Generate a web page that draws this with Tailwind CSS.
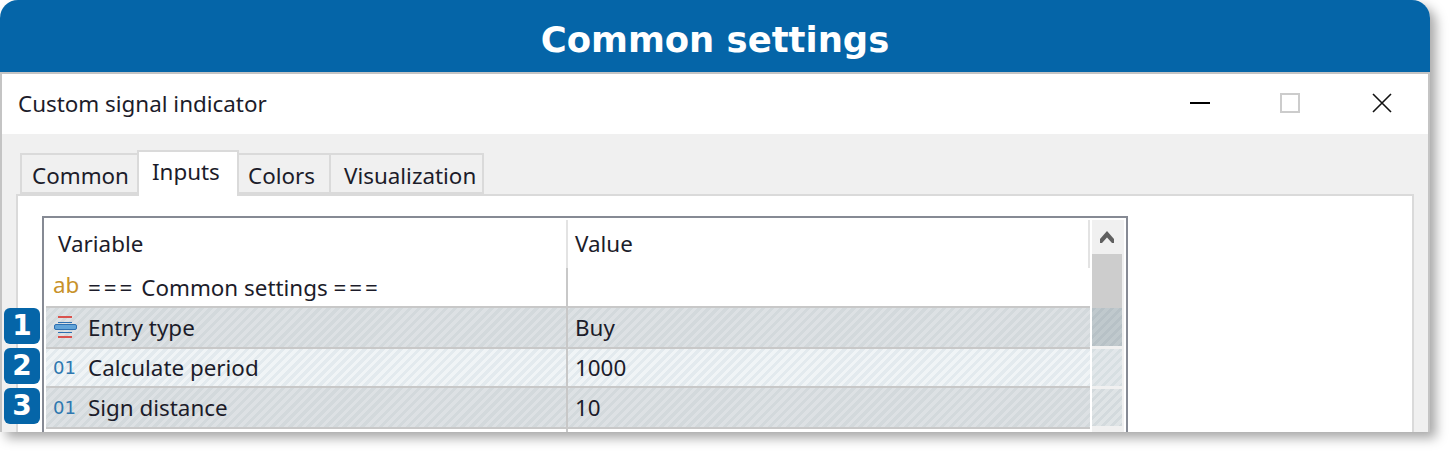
<!DOCTYPE html>
<html lang="en">
<head>
  <meta charset="UTF-8" />
  <title>Common settings</title>
  <script src="https://cdn.jsdelivr.net/npm/@tailwindcss/browser@4"></script>
</head>
<body class="bg-white h-[452px] overflow-hidden font-['Noto_Sans',sans-serif]">

  <div class="relative w-[1430px] h-[432px] rounded-t-[18px] shadow-[6px_6px_12px_rgba(0,0,0,0.35)]">
    <h1 class="h-[72px] rounded-t-[18px] bg-[#0565a8] text-white text-center font-['DejaVu_Sans',sans-serif] font-bold text-[35.4px] leading-[80px]">Common settings</h1>

    <div class="h-[360px] overflow-hidden border-t-2 border-x-2 border-[#c4c4c4] bg-[#f0f0f0] text-[22.4px] text-[#1c1c2a]">
      <!-- title bar -->
      <div class="h-[60px] bg-white flex items-center justify-between pl-[16px] pr-[36px] pb-[2px]">
        <span class="mt-[2px]">Custom signal indicator</span>
        <div class="flex items-center">
          <div class="w-[20px] h-[2px] bg-black"></div>
          <div class="ml-[70px] w-[20px] h-[20px] border-2 border-[#cccccc]"></div>
          <svg class="ml-[72px] w-[20px] h-[20px]" viewBox="0 0 20 20" fill="none" stroke="#111" stroke-width="1.6"><path d="M1 1l18 18M19 1L1 19" /></svg>
        </div>
      </div>

      <!-- tabs -->
      <div class="h-[60px] pl-[18px] flex items-end">
        <div class="w-[117px] h-[41px] pl-[10px] border-2 border-[#dadada] border-r-0 leading-[41px]">Common</div>
        <div class="relative z-10 w-[102px] h-[46px] -mb-[2px] pl-[13px] bg-white border-2 border-b-0 border-[#dadada] leading-[40px]">Inputs</div>
        <div class="w-[92px] h-[41px] pl-[9px] border-y-2 border-r-2 border-[#dadada] leading-[41px]">Colors</div>
        <div class="w-[153px] h-[41px] pl-[13px] border-y-2 border-r-2 border-[#dadada] leading-[41px]">Visualization</div>
      </div>

      <!-- panel -->
      <div class="ml-[14px] w-[1398px] h-[240px] bg-white border-2 border-[#dadada] pl-[24px] pt-[20px]">
        <div class="w-[1086px] h-[222px] border-2 border-[#868a94] flex p-[2px] pb-0 pr-0">
          <div class="w-[1044px]">
            <div class="h-[48px] grid grid-cols-[520px_2px_1fr]">
              <div class="pl-[12px] leading-[48px]">Variable</div>
              <div class="bg-[#e3e3e3]"></div>
              <div class="flex justify-between pl-[7px] leading-[48px]">Value<span class="w-[2px] h-[48px] bg-[#e3e3e3]"></span></div>
            </div>
            <div class="h-[38px] grid grid-cols-[520px_2px_1fr]">
              <div class="flex items-center pt-[2px]"><span class="w-[42px] pl-[7px] text-[#c8922a] -mt-[6px]">ab</span><span><span class="tracking-[3px]">===</span> Common settings <span class="tracking-[3px]">===</span></span></div>
              <div class="bg-[#c8c8c8]"></div>
              <div></div>
            </div>
            <div class="h-[43px] grid grid-cols-[520px_2px_1fr] border-y-2 border-y-[#c8c8c8] bg-[repeating-linear-gradient(135deg,#d3d9dc_0px,#d3d9dc_3.2px,#dde1e4_3.2px,#dde1e4_6.4px)]">
              <div class="flex items-center">
                <span class="w-[42px] pl-[7px] -mt-[1px]">
                  <svg class="block w-[24px] h-[22px]" viewBox="0 0 24 22"><path d="M5 0h14v2H5zM5 20h14v2H5z" fill="#d9534f" /><path d="M5 6h14v1H5zM5 16h14v1H5z" fill="#2e6fb0" /><rect x="1.500" y="8.500" width="22" height="5" rx="1.500" fill="#62a4d8" stroke="#2e6fb0" /></svg>
                </span>
                <span>Entry type</span>
              </div>
              <div class="bg-[#c8c8c8]"></div>
              <div class="pl-[7px] leading-[39px]">Buy</div>
            </div>
            <div class="h-[39px] grid grid-cols-[520px_2px_1fr] border-b-2 border-b-[#c8c8c8] bg-[repeating-linear-gradient(135deg,#e3eaee_0px,#e3eaee_3.2px,#f0f4f6_3.2px,#f0f4f6_6.4px)]">
              <div class="flex items-center"><span class="w-[42px] pl-[7px] text-[#2f78b0] text-[18px] font-['DejaVu_Sans',sans-serif]">01</span><span>Calculate period</span></div>
              <div class="bg-[#c8c8c8]"></div>
              <div class="pl-[7px] leading-[37px]">1000</div>
            </div>
            <div class="h-[41px] grid grid-cols-[520px_2px_1fr] border-b-2 border-b-[#c8c8c8] bg-[repeating-linear-gradient(135deg,#d3d9dc_0px,#d3d9dc_3.2px,#dde1e4_3.2px,#dde1e4_6.4px)]">
              <div class="flex items-center"><span class="w-[42px] pl-[7px] text-[#2f78b0] text-[18px] font-['DejaVu_Sans',sans-serif]">01</span><span>Sign distance</span></div>
              <div class="bg-[#c8c8c8]"></div>
              <div class="pl-[7px] leading-[39px]">10</div>
            </div>
            <div class="grid grid-cols-[520px_2px_1fr] h-[4px]"><div></div><div class="bg-[#c8c8c8]"></div><div></div></div>
          </div>

          <!-- scrollbar -->
          <div class="ml-[2px] w-[32px] h-[218px] pr-[2px] bg-[#f0f0f0] flex flex-col">
            <div class="h-[34px] flex items-center justify-center">
              <svg class="w-[14px] h-[12px]" viewBox="0 0 14 12" fill="#606060"><path d="M7 0l7 8v4h-2L7 6.500 2 12H0V8z" /></svg>
            </div>
            <div class="h-[54px] bg-[#cdcdcd]"></div>
            <div class="h-[38px] bg-[repeating-linear-gradient(135deg,#b7c1c6_0px,#b7c1c6_3.2px,#c0c9cd_3.2px,#c0c9cd_6.4px)]"></div>
            <div class="h-[3px]"></div>
            <div class="h-[37px] bg-[repeating-linear-gradient(135deg,#d7dfe2_0px,#d7dfe2_3.2px,#e2e7ea_3.2px,#e2e7ea_6.4px)]"></div>
            <div class="h-[3px]"></div>
            <div class="h-[37px] bg-[repeating-linear-gradient(135deg,#d3dadd_0px,#d3dadd_3.2px,#dfe4e6_3.2px,#dfe4e6_6.4px)]"></div>
          </div>
        </div>
      </div>
    </div>

    <!-- number badges -->
    <div class="absolute left-[4px] top-[308px] flex flex-col gap-[4px]">
      <div class="w-[36px] h-[36px] rounded-[6px] bg-[#0565a8] text-white text-center font-['DejaVu_Sans',sans-serif] font-bold text-[28px] leading-[36px]">1</div>
      <div class="w-[36px] h-[36px] rounded-[6px] bg-[#0565a8] text-white text-center font-['DejaVu_Sans',sans-serif] font-bold text-[28px] leading-[36px]">2</div>
      <div class="w-[36px] h-[36px] rounded-[6px] bg-[#0565a8] text-white text-center font-['DejaVu_Sans',sans-serif] font-bold text-[28px] leading-[36px]">3</div>
    </div>
  </div>

</body>
</html>
